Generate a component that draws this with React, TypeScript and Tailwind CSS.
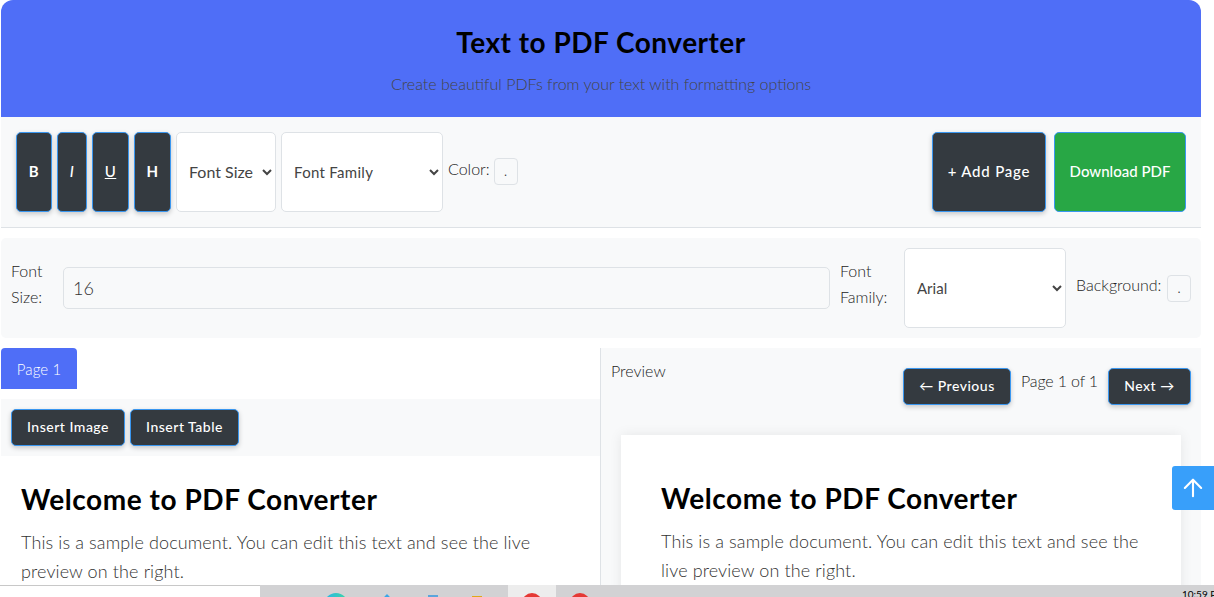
import { ArrowUp } from 'lucide-react';

const darkBtn =
  'rounded-[5px] border border-[#3a97f0] bg-[#343a40] font-medium text-white tracking-[0.5px] shadow-[0_2px_5px_rgba(0,0,0,0.2)]';

function Swatch() {
  return (
    <div className="flex h-[27px] w-[24px] items-center justify-center rounded-[4px] border border-[#dee2e6] bg-[#f8f9fa] text-[11px] leading-none text-[#333]">
      .
    </div>
  );
}

function DocContent() {
  return (
    <>
      <h2 className="text-[28px] font-bold leading-[34px] tracking-[0.55px] text-black">Welcome to PDF Converter</h2>
      <p className="mt-[12px] text-[18px] font-light leading-[28.8px] tracking-[0.12px] text-[#333]">
        This is a sample document. You can edit this text and see the live preview on the right.
      </p>
    </>
  );
}

export default function App() {
  return (
    <div className="relative h-[597px] w-[1214px] overflow-hidden bg-white font-['Lato',sans-serif]">
      <div className="ml-px w-[1200px]">
        <header className="flex h-[117px] flex-col items-center rounded-t-[12px] bg-[#4f6ef7]">
          <h1 className="mt-[24px] text-[28px] font-bold leading-[36px] tracking-[0.5px] text-black">Text to PDF Converter</h1>
          <p className="mt-[14px] text-[16px] font-light leading-[20px] text-[#444]">
            Create beautiful PDFs from your text with formatting options
          </p>
        </header>

        <div className="flex h-[111px] items-center gap-[5px] border-b border-[#dee2e6] bg-[#f8f9fa] pb-[1px] pl-[15px] pr-[15px]">
          <button className={`${darkBtn} h-[80px] w-[36px] text-[15px] !font-bold`}>B</button>
          <button className={`${darkBtn} h-[80px] w-[30px] text-[15px] italic`}>I</button>
          <button className={`${darkBtn} h-[80px] w-[37px] text-[15px] underline`}>U</button>
          <button className={`${darkBtn} h-[80px] w-[37px] text-[15px] !font-bold`}>H</button>
          <select className="h-[80px] w-[100px] rounded-[5px] border border-[#dee2e6] bg-white pl-[8px] text-[16px] text-[#444]">
            <option>Font Size</option>
          </select>
          <select className="h-[80px] w-[162px] rounded-[5px] border border-[#dee2e6] bg-white pl-[8px] text-[15px] tracking-[0.3px] text-[#444]">
            <option>Font Family</option>
          </select>
          <div className="flex items-center gap-[4px]">
            <span className="mb-[6px] text-[16px] font-light text-[#222]">Color:</span>
            <Swatch />
          </div>
          <div className="ml-auto flex gap-[8px]">
            <button className={`${darkBtn} h-[80px] w-[114px] text-[15px] !tracking-[0.8px]`}>+ Add Page</button>
            <button className="h-[80px] w-[132px] rounded-[5px] border border-[#3a97f0] bg-[#28a745] text-[15px] font-medium text-white">
              Download PDF
            </button>
          </div>
        </div>

        <div className="mt-[10px] flex h-[100px] items-center gap-[10px] rounded-[5px] bg-[#f8f9fa] px-[10px]">
          <label className="mb-[8px] w-[42px] text-[16px] font-light leading-[26px] text-[#222]">Font Size:</label>
          <input
            readOnly
            value="16"
            className="h-[42px] min-w-0 flex-1 rounded-[5px] border border-[#dee2e6] bg-[#f8f9fa] px-[9px] text-[18px] font-light text-[#333]"
          />
          <label className="mb-[8px] w-[54px] text-[16px] font-light leading-[26px] text-[#222]">Font Family:</label>
          <select className="h-[80px] w-[162px] rounded-[5px] border border-[#dee2e6] bg-white pl-[8px] text-[15px] text-[#444]">
            <option>Arial</option>
          </select>
          <div className="flex items-center gap-[5px]">
            <span className="mb-[6px] w-[86px] whitespace-nowrap text-[16px] font-light text-[#222]">Background:</span>
            <Swatch />
          </div>
        </div>

        <div className="mt-[10px] flex">
          <div className="w-[599px]">
            <div className="flex h-[41px] w-[76px] items-center justify-center rounded-t-[4px] bg-[#4f6ef7] pt-[2px] text-[15px] font-light tracking-[0.1px] text-white">
              Page 1
            </div>
            <div className="mt-[10px] flex h-[57px] items-center gap-[5px] bg-[#f8f9fa] px-[10px]">
              <button className={`${darkBtn} h-[37px] w-[114px] pb-[2px] text-[14px]`}>Insert Image</button>
              <button className={`${darkBtn} h-[37px] w-[109px] pb-[2px] text-[14px]`}>Insert Table</button>
            </div>
            <div className="px-[20px] pt-[26px]">
              <DocContent />
            </div>
          </div>

          <div className="h-[300px] flex-1 border-l border-[#dee2e6] bg-[#f8f9fa] px-[10px] pt-[10px]">
            <div className="flex items-start justify-between">
              <span className="text-[16px] font-light leading-[26px] text-[#222]">Preview</span>
              <div className="mt-[10px] flex items-start gap-[10px]">
                <button className={`${darkBtn} h-[37px] w-[108px] pb-[2px] text-[14px]`}>← Previous</button>
                <span className="text-[16px] font-light leading-[26px] tracking-[-0.15px] text-[#222]">Page 1 of 1</span>
                <button className={`${darkBtn} h-[37px] w-[83px] pb-[2px] text-[14px]`}>Next →</button>
              </div>
            </div>
            <div className="mx-[10px] mt-[30px] h-[300px] bg-white p-[40px] pt-[46px] shadow-[0_0_12px_rgba(0,0,0,0.08)]">
              <DocContent />
            </div>
          </div>
        </div>
      </div>

      {/* scroll to top button */}
      <button className="absolute left-[1172px] top-[466px] flex h-[44px] w-[42px] items-center justify-center rounded-l-[3px] bg-[#389ffa] text-white">
        <ArrowUp size={28} strokeWidth={1.8} />
      </button>

      {/* desktop taskbar peeking in at the bottom */}
      <div className="absolute bottom-0 left-0 flex h-[12px] w-full overflow-hidden bg-[#d2d2d4]">
        <div className="h-full w-[260px] border-t border-[#c8c8c8] bg-white" />
        <div className="relative flex-1">
          <div className="absolute left-[64px] top-[8px] h-[24px] w-[24px] rounded-full bg-gradient-to-r from-[#2fb4e8] to-[#3fd6a0]" />
          <div className="absolute left-[120px] top-[12px] h-[14px] w-[14px] rotate-45 bg-[#3aa6e8]" />
          <div className="absolute left-[168px] top-[10px] h-[10px] w-[10px] bg-[#5aa5dc]" />
          <div className="absolute left-[212px] top-[11px] h-[6px] w-[10px] bg-[#e0a818]" />
          <div className="absolute left-[248px] top-0 h-full w-[48px] bg-[#ededed]" />
          <div className="absolute left-[262px] top-[8px] h-[24px] w-[20px] rounded-full bg-[#e53935]" />
          <div className="absolute left-[310px] top-[8px] h-[24px] w-[20px] rounded-full bg-[#e53935]" />
          <span className="absolute left-[922px] top-[3px] whitespace-nowrap text-[10px] leading-[12px] text-black">10:59 PM</span>
        </div>
      </div>
    </div>
  );
}
